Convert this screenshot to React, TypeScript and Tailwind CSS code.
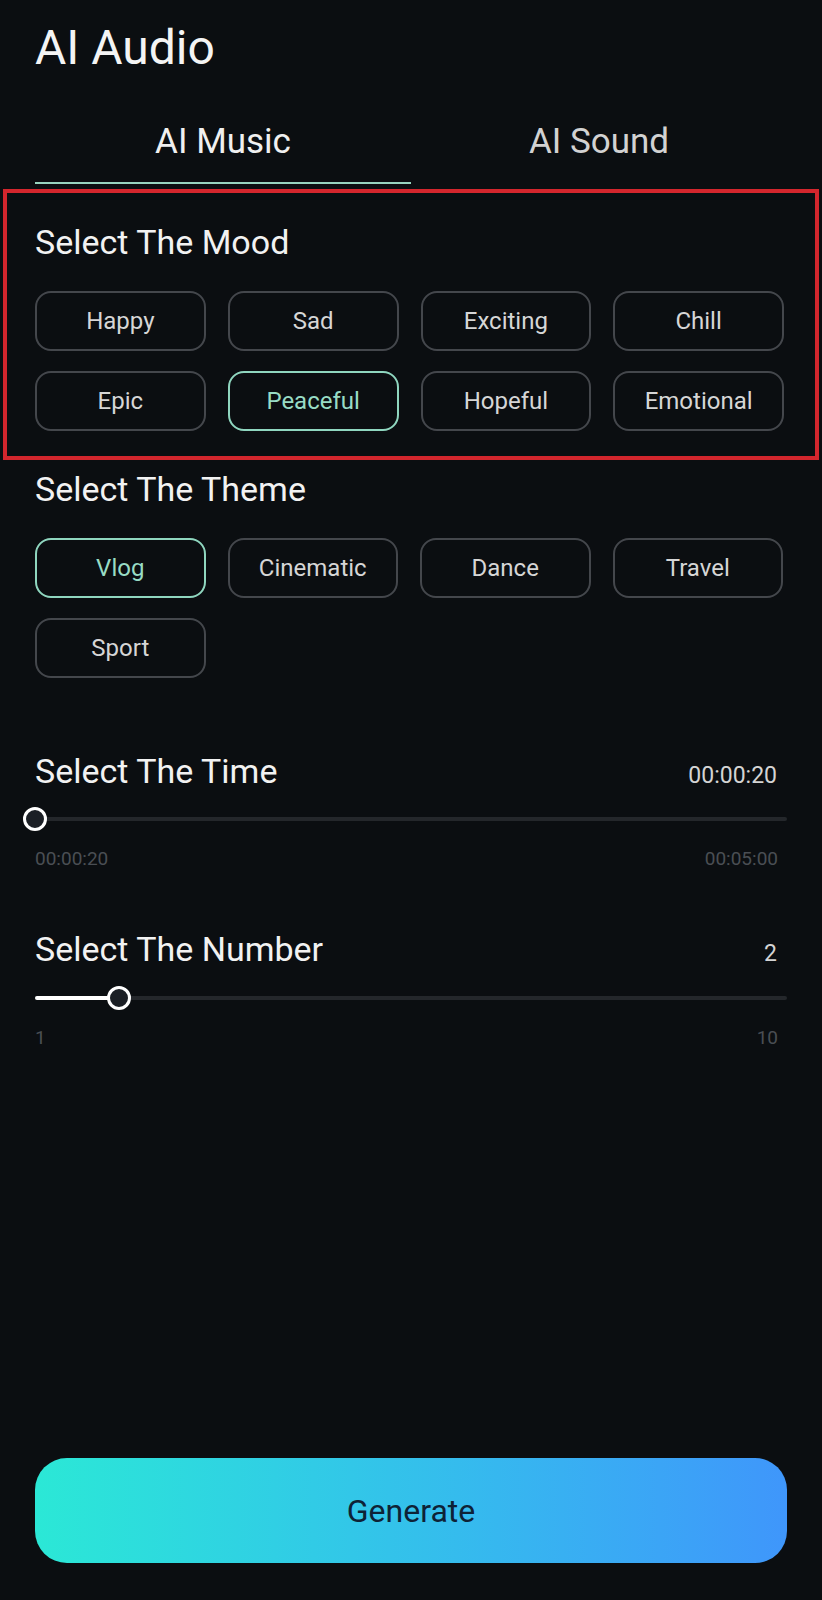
import { useState } from "react";

const moods = ["Happy", "Sad", "Exciting", "Chill", "Epic", "Peaceful", "Hopeful", "Emotional"];
const themes = ["Vlog", "Cinematic", "Dance", "Travel", "Sport"];

function Chip({ label, active, onClick }: { label: string; active: boolean; onClick: () => void }) {
  return (
    <button
      onClick={onClick}
      className={
        active
          ? "h-[60px] rounded-[16px] border-2 border-[#8fd6bf] text-[24px] leading-none text-[#98dcc5]"
          : "h-[60px] rounded-[16px] border-2 border-[#44474c] text-[24px] leading-none text-[#d6d6d6]"
      }
    >
      {label}
    </button>
  );
}

function Slider({ value, min, max }: { value: number; min: number; max: number }) {
  const pct = ((value - min) / (max - min)) * 100;
  return (
    <div className="relative h-[24px]">
      <div className="absolute left-0 right-0 top-[10px] h-[4px] rounded-full bg-[#24272b]" />
      <div className="absolute left-0 top-[10px] h-[4px] rounded-full bg-white" style={{ width: `${pct}%` }} />
      <div
        className="absolute top-0 h-[24px] w-[24px] -translate-x-1/2 rounded-full border-[3px] border-white bg-[#1b1f25]"
        style={{ left: `${pct}%` }}
      />
    </div>
  );
}

export default function App() {
  const [tab, setTab] = useState(0);
  const [mood, setMood] = useState("Peaceful");
  const [theme, setTheme] = useState("Vlog");

  return (
    <div className="flex min-h-[1600px] flex-col bg-[#0b0e11] font-[Roboto,sans-serif] text-white">
      {/* 标题 */}
      <h1 className="px-[35px] pt-[24px] text-[48px] leading-none font-normal text-[#f4f4f4]">AI Audio</h1>

      {/* 标签页 */}
      <div className="grid grid-cols-2 px-[35px]">
        {["AI Music", "AI Sound"].map((t, i) => (
          <button
            key={t}
            onClick={() => setTab(i)}
            className={
              tab === i
                ? "border-b-2 border-[#97d4bf] pt-[52px] pb-[23px] text-[35px] leading-none text-[#f0f0f0]"
                : "border-b-2 border-transparent pt-[52px] pb-[23px] text-[35px] leading-none text-[#d2d2d2]"
            }
          >
            {t}
          </button>
        ))}
      </div>

      {/* 心情 */}
      <div className="mx-[3px] mt-[5px] border-4 border-[#d3262d] pt-[32px] pr-[27px] pb-[25px] pl-[28px]">
        <h2 className="text-[34px] leading-none text-[#f2f2f2]">Select The Mood</h2>
        <div className="mt-[32px] mr-[4px] grid grid-cols-4 gap-x-[22px] gap-y-[20px]">
          {moods.map((m) => (
            <Chip key={m} label={m} active={mood === m} onClick={() => setMood(m)} />
          ))}
        </div>
      </div>

      {/* 主题 */}
      <div className="px-[35px] pt-[12px]">
        <h2 className="text-[34px] leading-none text-[#f2f2f2]">Select The Theme</h2>
        <div className="mt-[32px] mr-[4px] grid grid-cols-4 gap-x-[22px] gap-y-[20px]">
          {themes.map((t) => (
            <Chip key={t} label={t} active={theme === t} onClick={() => setTheme(t)} />
          ))}
        </div>
      </div>

      {/* 时长 */}
      <div className="px-[35px] pt-[76px]">
        <div className="flex items-baseline justify-between">
          <h2 className="text-[34px] leading-none text-[#f2f2f2]">Select The Time</h2>
          <span className="pr-[10px] text-[23px] leading-none text-[#d4d4d4]">00:00:20</span>
        </div>
        <div className="mt-[19px]">
          <Slider value={20} min={20} max={300} />
        </div>
        <div className="mt-[18px] flex justify-between pr-[9px] text-[19px] leading-none text-[#4a4e54]">
          <span>00:00:20</span>
          <span>00:05:00</span>
        </div>
      </div>

      {/* 数量 */}
      <div className="px-[35px] pt-[64px]">
        <div className="flex items-baseline justify-between">
          <h2 className="text-[34px] leading-none text-[#f2f2f2]">Select The Number</h2>
          <span className="pr-[10px] text-[23px] leading-none text-[#d4d4d4]">2</span>
        </div>
        <div className="mt-[20px]">
          <Slider value={2} min={1} max={10} />
        </div>
        <div className="mt-[18px] flex justify-between pr-[9px] text-[19px] leading-none text-[#4a4e54]">
          <span>1</span>
          <span>10</span>
        </div>
      </div>

      {/* 生成按钮 */}
      <div className="mt-auto px-[35px] pb-[37px]">
        <button className="h-[105px] w-full rounded-[32px] bg-linear-to-r from-[#2be8d6] to-[#3f96fb] text-[32px] leading-none text-[#0e2236]">
          Generate
        </button>
      </div>
    </div>
  );
}
